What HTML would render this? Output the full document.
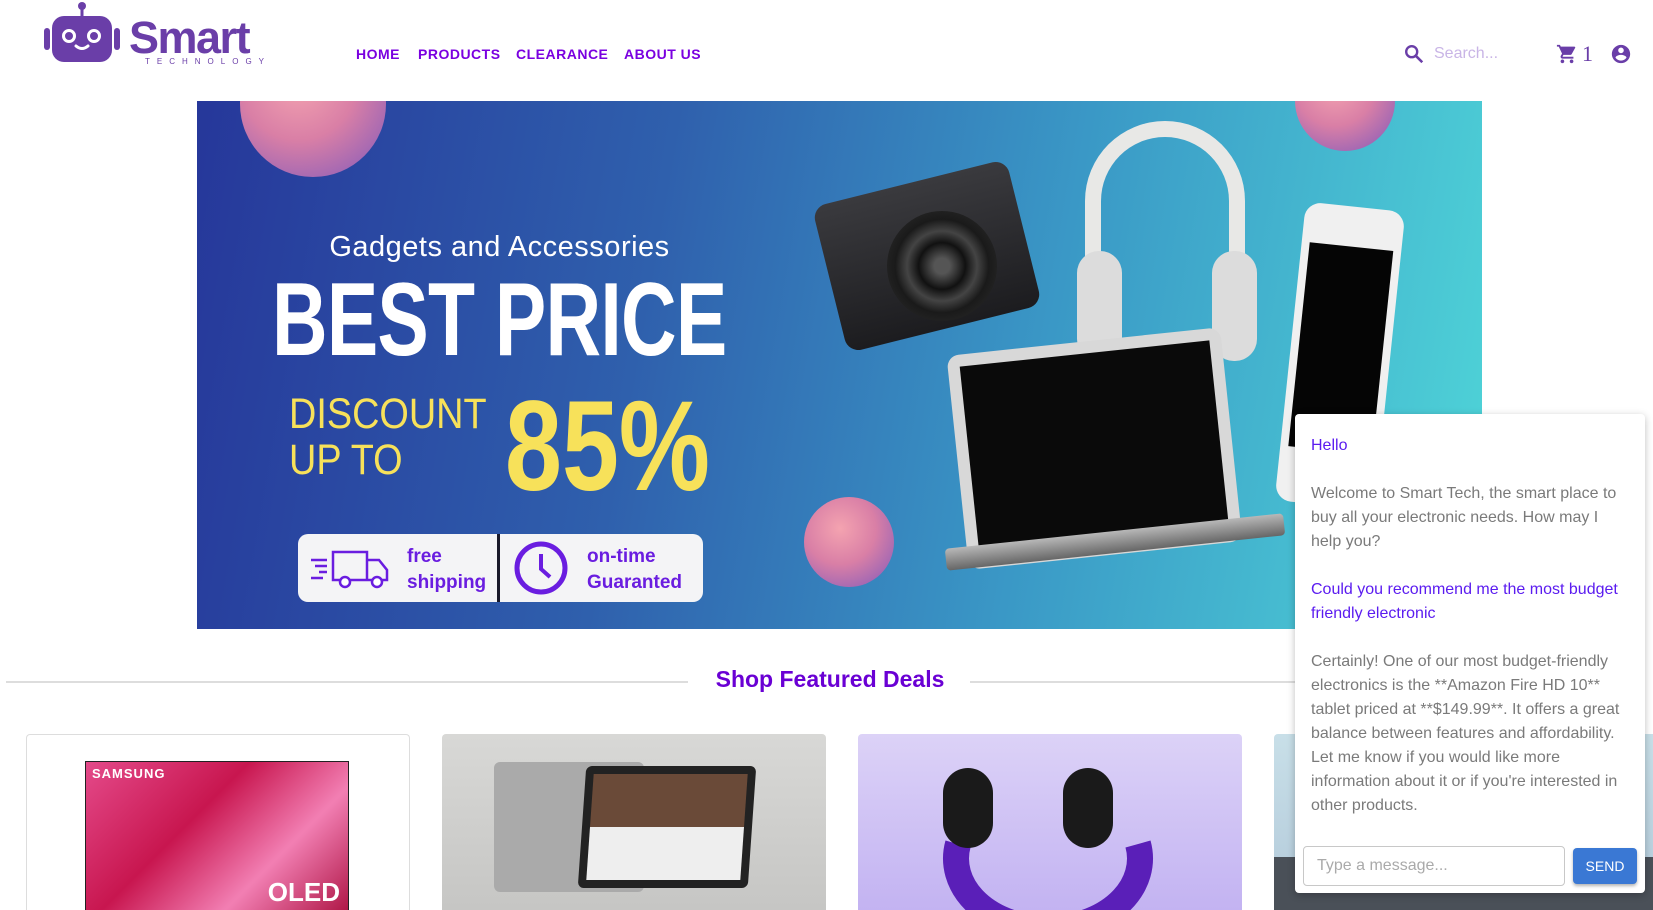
<!DOCTYPE html>
<html><head><meta charset="utf-8"><style>
*{margin:0;padding:0;box-sizing:border-box}
html,body{width:1653px;height:910px;overflow:hidden}
body{background:#fff;font-family:"Liberation Sans",sans-serif;position:relative}
.abs{position:absolute}
.nav a{position:absolute;top:46px;font-weight:bold;font-size:14px;color:#7a00e0;letter-spacing:.5px;text-decoration:none}
.sphere{position:absolute;border-radius:50%;background:radial-gradient(circle at 40% 35%,#f4a3b0,#d97fa6 45%,#8e5fb8 90%)}
.chat p{font-size:16px;line-height:24px;color:#7a7a7a;margin-bottom:24px}
.chat p.u{color:#5b1cf0}
.card{position:absolute;top:734px;width:384px;height:176px;border-radius:4px 4px 0 0;overflow:hidden}
</style></head><body>
<svg class="abs" style="left:42px;top:0" width="90" height="66" viewBox="0 0 90 66">
<circle cx="40" cy="6" r="4" fill="#6a3ea8"/><rect x="38.5" y="8" width="3" height="10" fill="#6a3ea8"/>
<rect x="2" y="28" width="6" height="22" rx="3" fill="#6a3ea8"/><rect x="72" y="28" width="6" height="22" rx="3" fill="#6a3ea8"/>
<rect x="10" y="16" width="60" height="46" rx="12" fill="#6a3ea8"/>
<circle cx="27" cy="36" r="5.5" fill="none" stroke="#fff" stroke-width="3"/><circle cx="52" cy="36" r="5.5" fill="none" stroke="#fff" stroke-width="3"/>
<path d="M34 46 q6 5 12 0" stroke="#fff" stroke-width="3" fill="none" stroke-linecap="round"/>
</svg>
<div class="abs" style="left:129px;top:12px;font-size:45px;font-weight:bold;color:#6a3ea8;letter-spacing:-1.5px">Smart</div>
<div class="abs" style="left:145px;top:57px;font-size:8px;color:#6a3ea8;letter-spacing:7px">TECHNOLOGY</div>
<div class="nav"><a style="left:356px">HOME</a><a style="left:418px">PRODUCTS</a><a style="left:516px">CLEARANCE</a><a style="left:624px">ABOUT US</a></div>
<svg class="abs" style="left:1403px;top:43px" width="22" height="22" viewBox="0 0 24 24"><circle cx="9.5" cy="9.5" r="6" fill="none" stroke="#6a3ea8" stroke-width="2.6"/><path d="M14 14l7 7" stroke="#6a3ea8" stroke-width="2.8"/></svg>
<div class="abs" style="left:1434px;top:45px;font-size:16px;color:#c9b5e6">Search...</div>
<svg class="abs" style="left:1556px;top:43px" width="22" height="22" viewBox="0 0 24 24"><path fill="#6a3ea8" d="M7 18c-1.1 0-2 .9-2 2s.9 2 2 2 2-.9 2-2-.9-2-2-2zM1 2v2h2l3.6 7.6-1.4 2.4c-.1.3-.2.6-.2 1 0 1.1.9 2 2 2h12v-2H7.4c-.1 0-.2-.1-.2-.2v-.1l.9-1.7h7.4c.8 0 1.4-.4 1.7-1l3.6-6.5c.1-.2.2-.3.2-.5 0-.6-.4-1-1-1H5.2l-.9-2H1zm16 16c-1.1 0-2 .9-2 2s.9 2 2 2 2-.9 2-2-.9-2-2-2z"/></svg>
<div class="abs" style="left:1582px;top:41px;font-size:22px;color:#6a3ea8;font-family:'Liberation Serif',serif">1</div>
<svg class="abs" style="left:1610px;top:43px" width="22" height="22" viewBox="0 0 24 24"><path fill="#6a3ea8" d="M12 2C6.5 2 2 6.5 2 12s4.5 10 10 10 10-4.5 10-10S17.5 2 12 2zm0 3c1.7 0 3 1.3 3 3s-1.3 3-3 3-3-1.3-3-3 1.3-3 3-3zm0 14.2c-2.5 0-4.7-1.3-6-3.2 0-2 4-3.1 6-3.1s6 1.1 6 3.1c-1.3 1.9-3.5 3.2-6 3.2z"/></svg>
<div class="abs" style="left:197px;top:101px;width:1285px;height:528px;overflow:hidden;background:linear-gradient(100deg,#26379a 0%,#2f60ad 35%,#3a98c6 65%,#4fd5d8 100%)">
 <div class="sphere" style="left:43px;top:-70px;width:146px;height:146px"></div>
 <div class="sphere" style="left:1098px;top:-50px;width:100px;height:100px"></div>
 <div class="sphere" style="left:607px;top:396px;width:90px;height:90px"></div>
 <div class="abs" style="left:90px;top:130px;width:425px;text-align:center;color:#fff;font-size:29px;letter-spacing:.5px">Gadgets and Accessories</div>
 <div class="abs" style="left:75px;top:160px;color:#fff;font-size:104px;font-weight:bold;transform:scaleX(.74);transform-origin:left;white-space:nowrap;letter-spacing:-1px">BEST PRICE</div>
 <div class="abs" style="left:92px;top:290px;color:#f7e15a;font-size:43px;line-height:46px;transform:scaleX(.88);transform-origin:left">DISCOUNT<br>UP TO</div>
 <div class="abs" style="left:308px;top:272px;color:#f7e15a;font-size:128px;font-weight:bold;transform:scaleX(.8);transform-origin:left;white-space:nowrap">85%</div>
 <div class="abs" style="left:101px;top:433px;width:405px;height:68px;background:#f4f4f6;border-radius:10px"></div>
 <div class="abs" style="left:300px;top:433px;width:3px;height:68px;background:#1a1a2a"></div>
 <svg class="abs" style="left:112px;top:445px" width="82" height="44" viewBox="0 0 82 44"><g fill="none" stroke="#6a1de0" stroke-width="2.5"><path d="M24 6h34v28H24zM58 14h12l8 10v10H58"/><circle cx="36" cy="36" r="5" fill="#fff"/><circle cx="68" cy="36" r="5" fill="#fff"/><path d="M2 14h16M6 20h12M10 26h8M2 32h12"/></g></svg>
 <div class="abs" style="left:210px;top:443px;color:#6a1de0;font-weight:bold;font-size:19px;line-height:26px">free<br>shipping</div>
 <svg class="abs" style="left:316px;top:439px" width="56" height="56" viewBox="0 0 56 56"><circle cx="28" cy="28" r="24" fill="none" stroke="#6a1de0" stroke-width="5"/><path d="M28 14v15l9 8" fill="none" stroke="#6a1de0" stroke-width="4"/></svg>
 <div class="abs" style="left:390px;top:443px;color:#6a1de0;font-weight:bold;font-size:19px;line-height:26px">on-time<br>Guaranted</div>
 <div class="abs" style="left:888px;top:20px;width:160px;height:170px;border:16px solid #e8e8e6;border-bottom:none;border-radius:80px 80px 0 0"></div>
 <div class="abs" style="left:880px;top:150px;width:45px;height:110px;border-radius:22px;background:#dcdcdc"></div>
 <div class="abs" style="left:1015px;top:150px;width:45px;height:110px;border-radius:22px;background:#dcdcdc"></div>
 <div class="abs" style="left:630px;top:80px;width:200px;height:150px;background:linear-gradient(#3a3a3e,#1c1c1f);border-radius:14px;transform:rotate(-14deg)"></div>
 <div class="abs" style="left:690px;top:110px;width:110px;height:110px;border-radius:50%;background:radial-gradient(circle,#555 10%,#111 30%,#444 45%,#1a1a1a 60%,#333 100%)"></div>
 <div class="abs" style="left:1093px;top:105px;width:100px;height:300px;background:#f0f0f0;border-radius:16px;transform:rotate(6deg)"><div style="margin:40px 8px;height:205px;background:#050505"></div></div>
 <div class="abs" style="left:760px;top:240px;width:275px;height:215px;background:#d8d8d8;border-radius:12px;transform:rotate(-6deg)"><div style="margin:12px;height:190px;background:#0a0a0a"></div></div>
 <div class="abs" style="left:748px;top:430px;width:340px;height:22px;background:linear-gradient(#b8b8b8,#666);border-radius:4px;transform:rotate(-6deg)"></div>
</div>
<div class="abs" style="left:6px;top:681px;width:682px;height:2px;background:#ddd"></div>
<div class="abs" style="left:970px;top:681px;width:330px;height:2px;background:#ddd"></div>
<div class="abs" style="left:700px;top:666px;width:260px;text-align:center;font-size:23px;font-weight:bold;color:#6a00d4">Shop Featured Deals</div>
<div class="card" style="left:26px;border:1px solid #ddd;border-bottom:none;background:#fff"><div style="position:absolute;left:58px;top:26px;width:264px;height:149px;background:linear-gradient(135deg,#e44a8a,#c8164f 40%,#f27fb3 70%,#b01848);border:1px solid #222;border-bottom:none"><div style="color:#fff;font-weight:bold;font-size:13px;padding:4px 6px;letter-spacing:1px">SAMSUNG</div><div style="position:absolute;right:8px;bottom:2px;color:#fff;font-weight:bold;font-size:26px">OLED</div></div></div>
<div class="card" style="left:442px;background:linear-gradient(#d8d8d6,#c6c6c4)"><div style="position:absolute;left:52px;top:28px;width:150px;height:130px;background:#aaa;border-radius:6px"></div><div style="position:absolute;left:140px;top:32px;width:170px;height:122px;background:#222;border-radius:6px;transform:skewX(-4deg)"><div style="margin:8px;height:106px;background:linear-gradient(#6a4a38 50%,#eee 50%)"></div></div></div>
<div class="card" style="left:858px;background:linear-gradient(#dcd2f7,#c3b3f2)"><svg width="384" height="176" viewBox="0 0 384 176" style="display:block"><path d="M100 110 A92 70 0 1 0 280 110" fill="none" stroke="#5a1fb8" stroke-width="26"/><rect x="85" y="34" width="50" height="80" rx="25" fill="#1a1a1a"/><rect x="205" y="34" width="50" height="80" rx="25" fill="#1a1a1a"/></svg></div>
<div class="card" style="left:1274px;background:linear-gradient(#c8dfe8,#b9d0de 70%,#4a5058 70%)"></div>
<div class="abs chat" style="left:1295px;top:414px;width:350px;height:479px;background:#fff;border-radius:4px;box-shadow:0 2px 8px rgba(0,0,0,.25);padding:20px 16px 0 16px">
 <p class="u">Hello</p>
 <p>Welcome to Smart Tech, the smart place to buy all your electronic needs. How may I help you?</p>
 <p class="u">Could you recommend me the most budget friendly electronic</p>
 <p>Certainly! One of our most budget-friendly electronics is the **Amazon Fire HD 10** tablet priced at **$149.99**. It offers a great balance between features and affordability. Let me know if you would like more information about it or if you're interested in other products.</p>
 <div class="abs" style="left:8px;top:432px;width:262px;height:40px;border:1px solid #c8c8c8;border-radius:4px;padding:10px 13px;font-size:16px;color:#aaa">Type a message...</div>
 <div class="abs" style="left:278px;top:434px;width:64px;height:36px;background:#3a78d4;border-radius:4px;color:#fff;font-size:14px;text-align:center;line-height:36px;box-shadow:0 2px 3px rgba(0,0,0,.3)">SEND</div>
</div>
</body></html>
